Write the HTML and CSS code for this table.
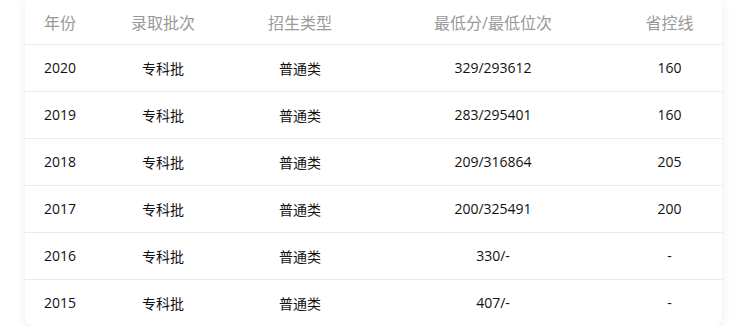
FILE: index.html
```html
<!DOCTYPE html>
<html>
  <head>
    <meta charset="utf-8" />
    <title>历年分数线</title>
    <link rel="stylesheet" href="styles.css">
  </head>
  <body>
    <div class="card">
      <div class="row head">
        <div>年份</div>
        <div>录取批次</div>
        <div>招生类型</div>
        <div>最低分/最低位次</div>
        <div>省控线</div>
      </div>
      <div class="row">
        <div>2020</div><div>专科批</div><div>普通类</div><div>329/293612</div><div>160</div>
      </div>
      <div class="row">
        <div>2019</div><div>专科批</div><div>普通类</div><div>283/295401</div><div>160</div>
      </div>
      <div class="row">
        <div>2018</div><div>专科批</div><div>普通类</div><div>209/316864</div><div>205</div>
      </div>
      <div class="row">
        <div>2017</div><div>专科批</div><div>普通类</div><div>200/325491</div><div>200</div>
      </div>
      <div class="row">
        <div>2016</div><div>专科批</div><div>普通类</div><div>330/-</div><div>-</div>
      </div>
      <div class="row">
        <div>2015</div><div>专科批</div><div>普通类</div><div>407/-</div><div>-</div>
      </div>
    </div>
  </body>
</html>
```

FILE: styles.css
```css
body {
  margin: 0;
  background-color: #ffffff;
  font-family: "Open Sans", "Noto Sans CJK SC", sans-serif;
}

.card {
  margin: 0 20px 0 25px;
  width: 697px;
  background-color: #ffffff;
  border-radius: 0 0 8px 8px;
  box-shadow: 0 2px 12px rgba(0, 0, 0, 0.08);
}

.row {
  display: grid;
  grid-template-columns: 70px 136px 138px 248px 105px;
  align-items: center;
  height: 46px;
  padding-bottom: 1px;
  box-sizing: border-box;
  border-top: 1px solid #ebebeb;
  font-size: 14px;
  color: #111111;
  text-align: center;
}

.row.head {
  height: 44px;
  padding-bottom: 0;
  border-top: none;
  font-size: 16px;
  color: #999999;
}

.row + .row {
  height: 47px;
}
```
